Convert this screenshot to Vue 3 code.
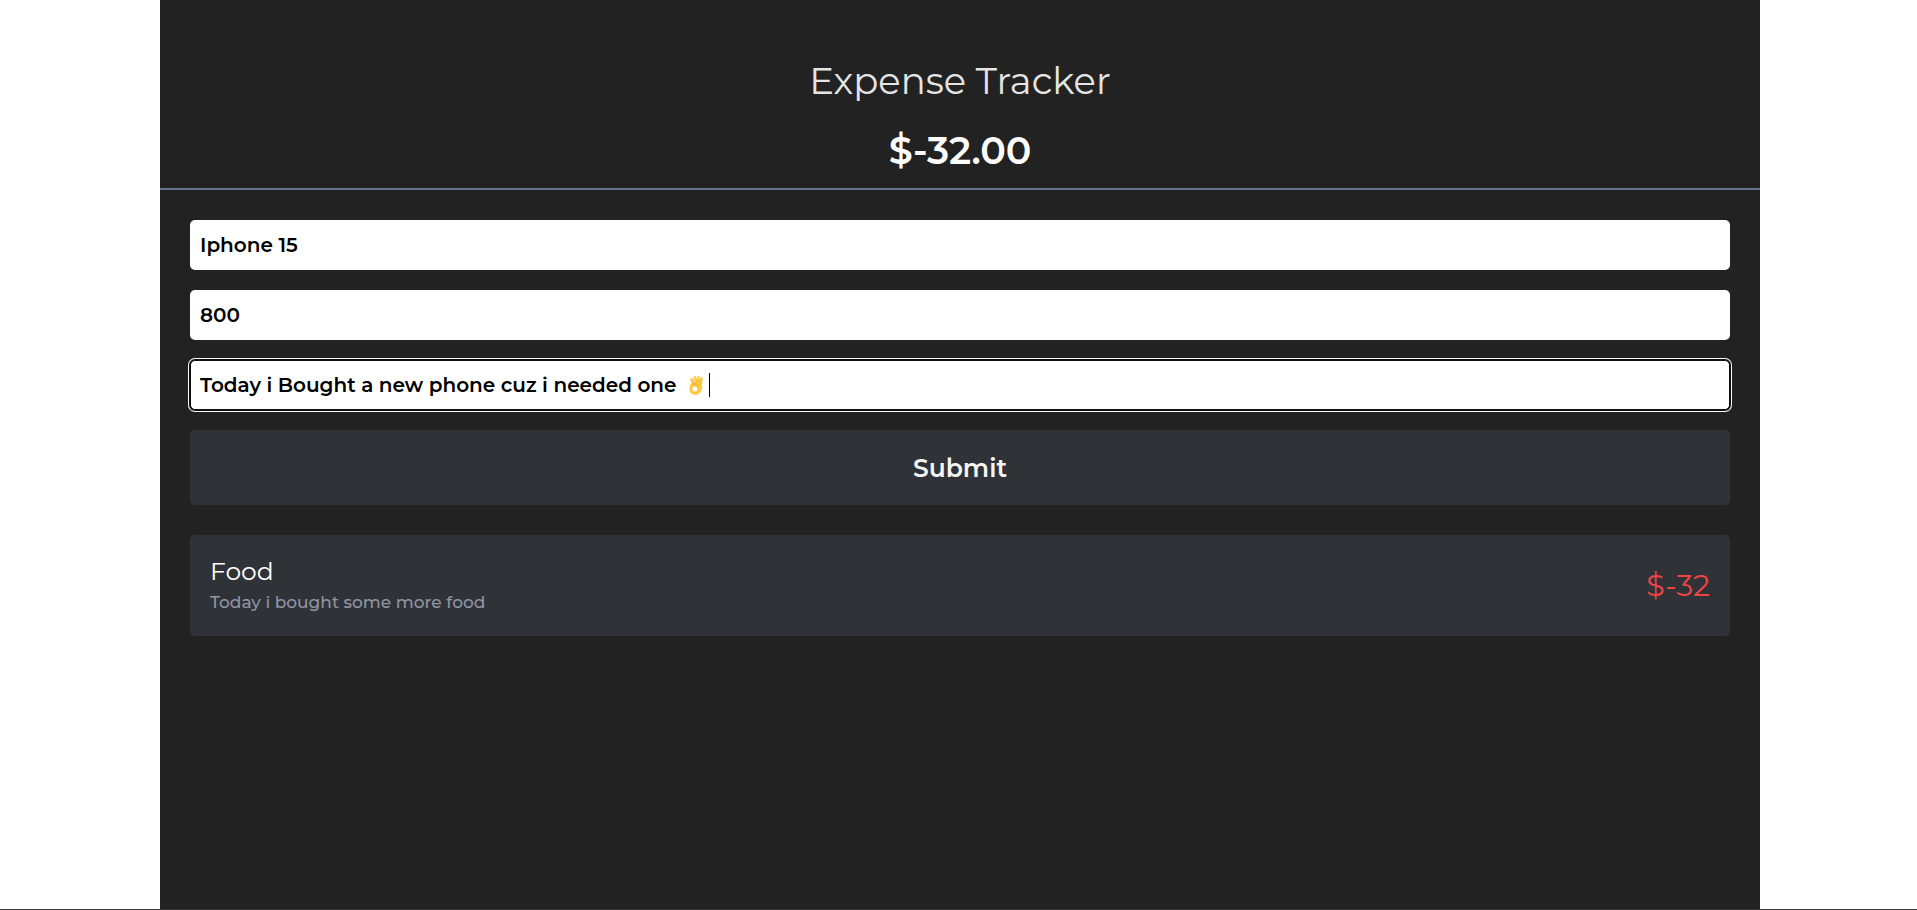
<script setup>
import { computed, ref } from 'vue'

const title = ref('Iphone 15')
const amount = ref('800')
const description = ref('Today i Bought a new phone cuz i needed one')
const expenses = ref([
  { id: 1, title: 'Food', description: 'Today i bought some more food', amount: -32 }
])
const balance = computed(() => expenses.value.reduce((sum, e) => sum + e.amount, 0).toFixed(2))

function submit() {
  const value = Number(amount.value)
  if (!title.value || Number.isNaN(value)) return
  expenses.value.push({
    id: Date.now(),
    title: title.value,
    description: description.value,
    amount: value
  })
}
</script>

<template>
  <div class="page">
    <main class="panel">
      <header class="header">
        <h1 class="heading">Expense Tracker</h1>
        <p class="balance">${{ balance }}</p>
      </header>
      <div class="content">
        <form class="form" @submit.prevent="submit">
          <input v-model="title" class="field" type="text" aria-label="Title" />
          <input v-model="amount" class="field" type="text" inputmode="numeric" aria-label="Amount" />
          <div class="active">
            <input v-model="description" class="field focused" type="text" aria-label="Description" />
            <span class="trail" aria-hidden="true">
              <svg class="hand" viewBox="0 0 14 20" width="14" height="20">
                <g fill="none" stroke-linecap="round">
                  <path d="M4.500 9 2.200 4.200M7.600 8.500 5.800 2M9.800 9 9.500 1.800M11.800 11.500 12.600 3" stroke="#ffc83d" stroke-width="2.200" />
                  <path d="M5.400 7.600 4.200 4.200M8.500 7.600 7.700 3.800M10.900 8 11.100 4.400" stroke="#e59600" stroke-width="0.700" />
                </g>
                <path fill-rule="evenodd" d="M6 8C2.200 8 .4 10.500.4 14c0 3.500 2.400 5.700 5.700 5.700 3.900 0 6.800-2.700 6.800-7V7.500L8 6.800ZM5.800 11.600a2.500 2.500 0 1 1 0 5 2.500 2.500 0 0 1 0-5Z" fill="#ffc83d" />
                <path d="M1.800 9.500c1.700-1 4.200-1 5.800.500" fill="none" stroke="#e59600" stroke-width="0.800" />
              </svg>
              <i class="caret"></i>
            </span>
          </div>
          <button class="submit" type="submit">Submit</button>
        </form>
        <ul class="list">
          <li v-for="expense in expenses" :key="expense.id" class="item">
            <div>
              <h2 class="name">{{ expense.title }}</h2>
              <p class="note">{{ expense.description }}</p>
            </div>
            <span class="amount">${{ expense.amount }}</span>
          </li>
        </ul>
      </div>
    </main>
  </div>
</template>

<style>
body {
  margin: 0;
  background: #fff;
}
</style>

<style scoped>
.page {
  box-sizing: border-box;
  min-height: 100vh;
  display: flex;
  padding: 0 157px 0 160px;
  border-bottom: 1px solid #3b3838;
  font-family: Montserrat, Inter, "Open Sans", sans-serif;
}
.panel {
  flex: 1;
  min-width: 0;
  background: #222;
}
.header {
  padding-top: 56px;
  border-bottom: 2px solid #64748b;
  text-align: center;
}
.heading {
  margin: 0;
  color: #e5e5e5;
  font-size: 37px;
  line-height: 50px;
  font-weight: 400;
}
.balance {
  margin: 20px 0 0;
  padding-bottom: 12px;
  color: #fff;
  font-size: 38px;
  line-height: 50px;
  font-weight: 600;
}
.content {
  padding: 30px;
}
.form {
  display: flex;
  flex-direction: column;
  gap: 20px;
}
.field {
  box-sizing: border-box;
  display: block;
  width: 100%;
  height: 50px;
  padding: 0 10px;
  border: 0;
  border-radius: 5px;
  background: #fff;
  color: #000;
  font: inherit;
  font-size: 20px;
  font-weight: 600;
}
.active {
  position: relative;
}
.focused {
  border: 1px solid #101010;
  padding: 0 9px;
  box-shadow: 0 0 0 1px #101010, 0 0 0 2px #fff;
  outline: 0;
}
.trail {
  position: absolute;
  left: 499px;
  top: 0;
  height: 50px;
  display: flex;
  align-items: center;
  gap: 6px;
}
.caret {
  width: 1px;
  height: 24px;
  background: #000;
}
.submit {
  height: 75px;
  border: 0;
  border-radius: 5px;
  background: #2f3237;
  color: #f5f5f5;
  font: inherit;
  font-size: 25px;
  font-weight: 600;
}
.list {
  margin: 30px 0 0;
  padding: 0;
  list-style: none;
}
.item {
  display: flex;
  justify-content: space-between;
  align-items: center;
  padding: 20px;
  border-radius: 5px;
  background: #2f3237;
}
.name {
  margin: 0;
  color: #fff;
  font-size: 25px;
  line-height: 33px;
  font-weight: 400;
}
.note {
  margin: 0;
  color: #9195a3;
  font-size: 17px;
  line-height: 28px;
  font-weight: 500;
}
.amount {
  color: #ef4444;
  font-size: 30px;
  line-height: 40px;
  font-weight: 400;
}
</style>
